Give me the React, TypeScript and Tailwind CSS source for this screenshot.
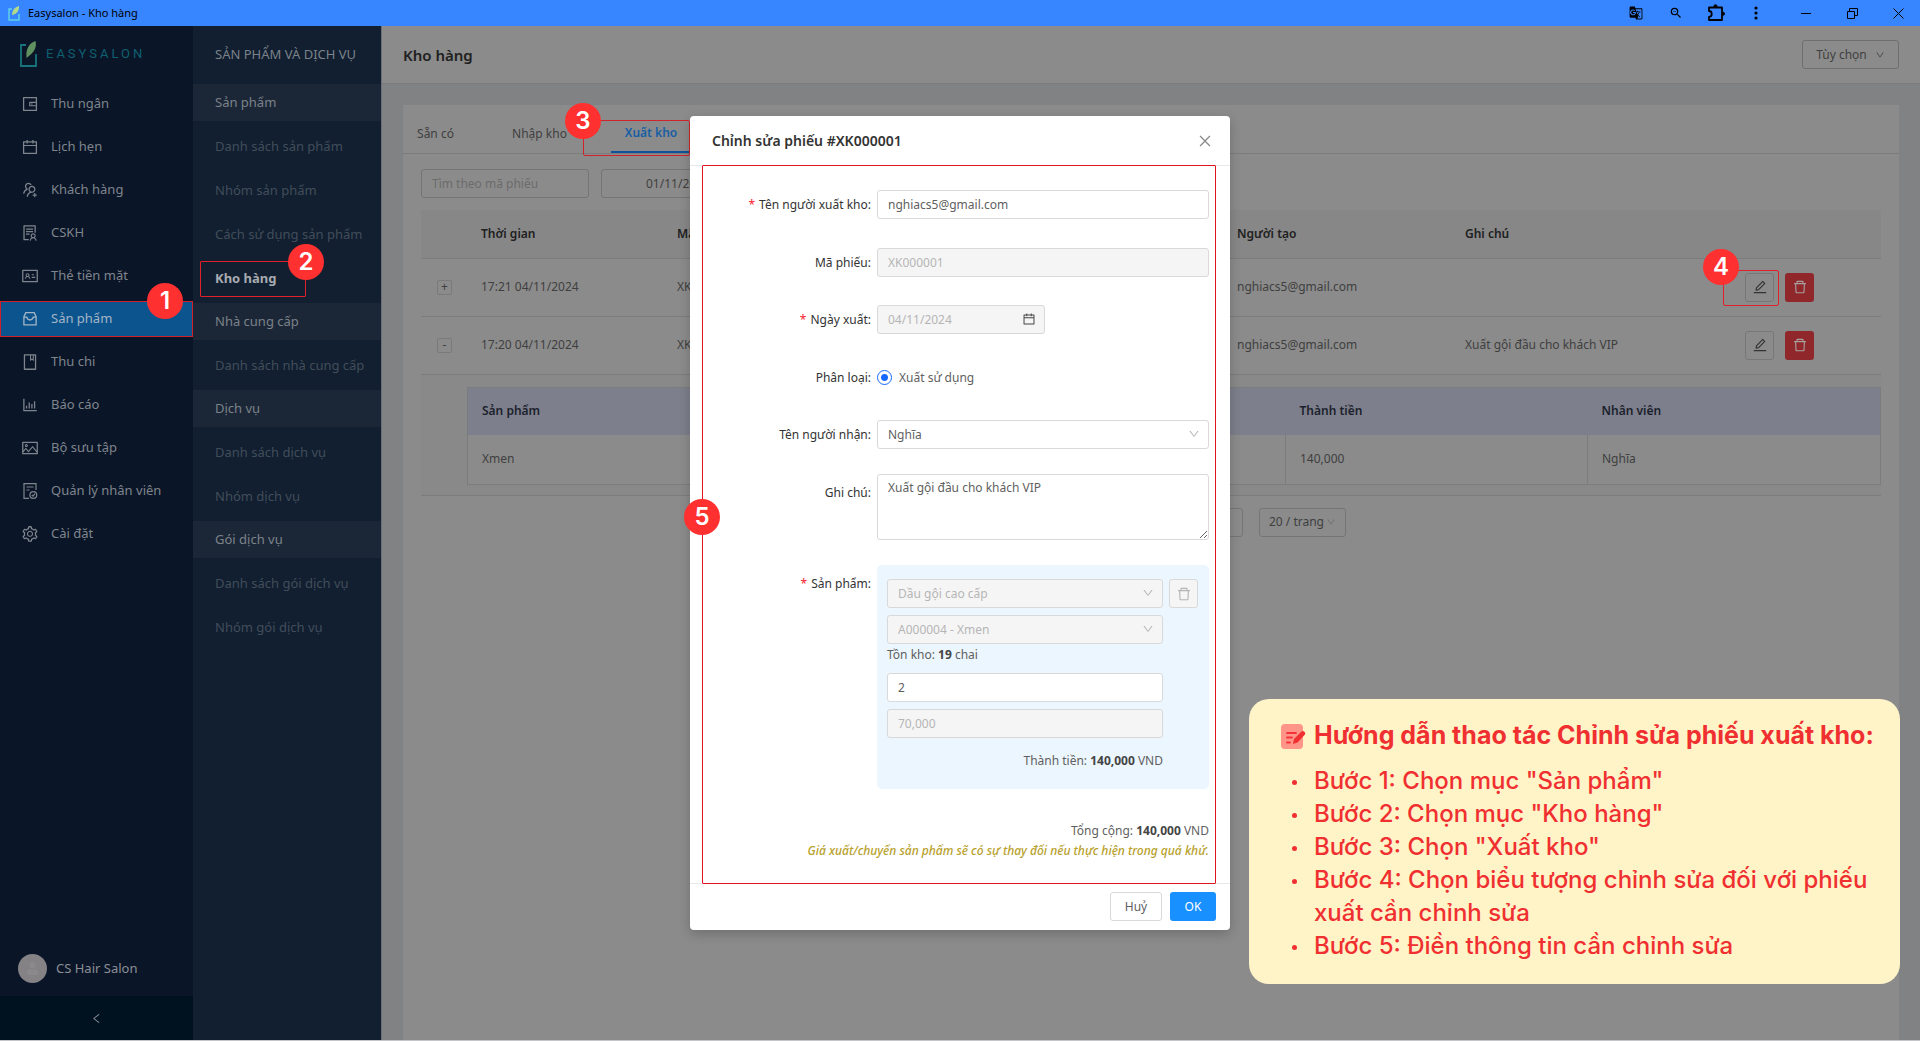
import React from "react";
import {
  AiOutlineWallet, AiOutlineCalendar, AiOutlineUsergroupAdd, AiOutlineSolution, AiOutlineIdcard,
  AiOutlineBook, AiOutlineBarChart, AiOutlinePicture, AiOutlineSetting,
  AiOutlineEdit, AiOutlineDelete, AiOutlineDown, AiOutlineLeft, AiOutlineClose,
} from "react-icons/ai";
import { MdGTranslate, MdZoomOut } from "react-icons/md";
import { FaUser } from "react-icons/fa";

const InboxIcon = ({ className }: { className?: string }) => (
  <svg viewBox="0 0 18 18" className={className} fill="none" stroke="currentColor" strokeWidth="1.300">
    <path d="M4.800 2.700h8.400l1.900 4v8.100H2.900V6.700z" />
    <path d="M3 7.200h2.800c.5 2 1.600 2.800 3.200 2.800s2.700-.8 3.200-2.800H15" />
  </svg>
);

const StaffIcon = ({ className }: { className?: string }) => (
  <svg viewBox="0 0 18 18" className={className} fill="none" stroke="currentColor" strokeWidth="1.200">
    <path d="M8 16.300H3V1.700h12v6.300M5.500 5h7M5.500 8h3" />
    <circle cx="12.300" cy="13" r="3.400" />
    <path d="M10.800 13l1.200 1.200 2-2.500" />
  </svg>
);

const PuzzleIcon = () => (
  <svg viewBox="0 0 18 18" className="size-[18px]" fill="none" stroke="black" strokeWidth="1.800">
    <path d="M2 3.500h13v12.500H2v-3.200c1.700 0 2.700-1.200 2.700-2.900S3.700 7 2 7z" strokeLinejoin="round" />
    <path d="M7 3V2.200a1.500 1.500 0 0 1 3 0V3zM15.500 8.200h.5a1.500 1.500 0 0 1 0 3h-.5z" fill="black" strokeWidth="1" />
  </svg>
);

const navItems = [
  { label: "Thu ngân", Icon: AiOutlineWallet },
  { label: "Lịch hẹn", Icon: AiOutlineCalendar },
  { label: "Khách hàng", Icon: AiOutlineUsergroupAdd },
  { label: "CSKH", Icon: AiOutlineSolution },
  { label: "Thẻ tiền mặt", Icon: AiOutlineIdcard },
  { label: "Sản phẩm", Icon: InboxIcon, active: true },
  { label: "Thu chi", Icon: AiOutlineBook },
  { label: "Báo cáo", Icon: AiOutlineBarChart },
  { label: "Bộ sưu tập", Icon: AiOutlinePicture },
  { label: "Quản lý nhân viên", Icon: StaffIcon },
  { label: "Cài đặt", Icon: AiOutlineSetting },
];

const groups = [
  { title: "Sản phẩm", items: ["Danh sách sản phẩm", "Nhóm sản phẩm", "Cách sử dụng sản phẩm", "Kho hàng"] },
  { title: "Nhà cung cấp", items: ["Danh sách nhà cung cấp"] },
  { title: "Dịch vụ", items: ["Danh sách dịch vụ", "Nhóm dịch vụ"] },
  { title: "Gói dịch vụ", items: ["Danh sách gói dịch vụ", "Nhóm gói dịch vụ"] },
];

function Badge({ n, className }: { n: number; className: string }) {
  return (
    <span className={`absolute z-10 flex size-9 items-center justify-center rounded-full bg-[#ff3030] font-['Inter',sans-serif] text-2xl font-semibold text-white ${className}`}>
      {n}
    </span>
  );
}

function TitleBar() {
  return (
    <header className="flex h-[26px] shrink-0 items-center bg-[#3785ff] text-black">
      <svg viewBox="0 0 12 16" className="ml-2 h-4 w-3">
        <path d="M4 4H1v11h10V9" fill="none" stroke="#5fd0e8" strokeWidth="1.500" />
        <path d="M4 10C4 5 7 2 11 1c.3 4-1.500 8-7 9z" fill="#b5d98a" />
      </svg>
      <span className="ml-2 text-[11px]">Easysalon - Kho hàng</span>
      <div className="ml-auto flex items-center">
        <button aria-label="Dịch" className="flex w-10 justify-center"><MdGTranslate className="size-[14px]" /></button>
        <button aria-label="Thu nhỏ chữ" className="flex w-10 justify-center"><MdZoomOut className="size-[14px]" /></button>
        <button aria-label="Tiện ích" className="flex w-10 justify-center"><PuzzleIcon /></button>
        <button aria-label="Menu" className="flex w-10 justify-center">
          <svg viewBox="0 0 4 14" className="h-[14px] w-1"><circle cx="2" cy="2" r="1.600" /><circle cx="2" cy="7" r="1.600" /><circle cx="2" cy="12" r="1.600" /></svg>
        </button>
        <button aria-label="Thu nhỏ" className="ml-2 flex w-11 justify-center">
          <svg viewBox="0 0 10 10" className="size-[10px]" stroke="black"><path d="M0 5.500h10" /></svg>
        </button>
        <button aria-label="Khôi phục" className="flex w-12 justify-center">
          <svg viewBox="0 0 11 11" className="size-[11px]" fill="none" stroke="black"><path d="M.5 3.500h7v7h-7zM2.500 3.500v-3h8v7h-3" /></svg>
        </button>
        <button aria-label="Đóng" className="flex w-11 justify-center">
          <svg viewBox="0 0 11 11" className="size-[11px]" stroke="black"><path d="M.5.5l10 10M10.500.5l-10 10" /></svg>
        </button>
      </div>
    </header>
  );
}

function MainNav() {
  return (
    <nav className="flex w-[193px] shrink-0 flex-col bg-[#0a1528] text-[13px] text-[#7f858c]">
      <a href="#" className="ml-5 flex h-[56px] items-center gap-2" aria-label="Easysalon">
        <svg viewBox="0 0 18 28" className="h-7 w-[18px]">
          <path d="M6 5H1v21h15V14" fill="none" stroke="#17747c" strokeWidth="1.800" />
          <path d="M6.500 18C5.500 9 9 3 15.500 1c1.500 6.500-1 11-9 17z" fill="#5f9060" />
        </svg>
        <span className="font-['Roboto',sans-serif] text-[13px] tracking-[3px] text-[#0f6070]">EASYSALON</span>
      </a>
      {navItems.map(({ label, Icon, active }) => (
        <div key={label} className="relative flex h-[43px] items-center">
          <a href="#" className={`flex h-9 w-full items-center gap-3 pl-[21px] ${active ? "bg-[#0c548e] text-[#a3b5c6] ring-1 ring-[#d0202c] ring-inset" : ""}`}>
            <Icon className="size-[18px]" />
            {label}
          </a>
          {active && <Badge n={1} className="right-[10px] -top-[14px]" />}
        </div>
      ))}
      <div className="mt-auto mb-[13px] flex items-center gap-[9px] pl-[18px] text-[#8b8f95]">
        <span className="flex size-[29px] items-center justify-center overflow-hidden rounded-full bg-[#848284]">
          <FaUser className="size-[13px] text-[#8b898b]" />
        </span>
        CS Hair Salon
      </div>
      <button aria-label="Thu gọn" className="flex h-11 items-center justify-center bg-[#001120]">
        <AiOutlineLeft className="size-[13px]" />
      </button>
    </nav>
  );
}

function SubNav() {
  return (
    <nav className="w-[189px] shrink-0 border-r border-[#6b7078] bg-[#111f30] text-[13px] text-[#7b828a]">
      <h2 className="flex h-[58px] items-center pl-[22px]">SẢN PHẨM VÀ DỊCH VỤ</h2>
      {groups.map((g) => (
        <section key={g.title}>
          <h3 className="flex h-[37px] items-center bg-[#1b2737] pl-[22px]">{g.title}</h3>
          <ul className="pt-1 pb-[2px]">
            {g.items.map((it) => (
              <li key={it} className="relative flex h-11 items-center">
                {it === "Kho hàng" ? (
                  <>
                    <a href="#" className="ml-[7px] flex h-9 w-[106px] items-center rounded-[1px] border border-[#e0202a] pl-[14px] font-bold text-[#a7abb0]">{it}</a>
                    <Badge n={2} className="left-[95px] -top-[13px]" />
                  </>
                ) : (
                  <a href="#" className="pl-[22px] text-[#424d5a]">{it}</a>
                )}
              </li>
            ))}
          </ul>
        </section>
      ))}
    </nav>
  );
}

const rows = [
  { open: false, time: "17:21 04/11/2024", code: "XK000002", user: "nghiacs5@gmail.com", note: "" },
  { open: true, time: "17:20 04/11/2024", code: "XK000001", user: "nghiacs5@gmail.com", note: "Xuất gội đầu cho khách VIP" },
];

function Warehouse() {
  return (
    <main className="flex min-w-0 flex-1 flex-col bg-[#808284] text-xs text-[#3f3f3f]">
      <div className="flex h-[58px] shrink-0 items-center justify-between border-b border-[#7b7c7d] bg-[#8b8b8b] px-[21px]">
        <h1 className="text-[15px] font-semibold text-[#202020]">Kho hàng</h1>
        <button className="flex h-[29px] w-[97px] items-center justify-center gap-2 rounded-[3px] border border-[#6f6f6f]">
          Tùy chọn <AiOutlineDown className="size-[10px]" />
        </button>
      </div>
      <section className="mx-[21px] mt-[21px] flex-1 bg-[#8b8b8b]">
        <div className="flex h-[49px] items-stretch border-b border-[#7c7c7c]">
          <button className="w-[65px] pt-[10px]">Sẵn có</button>
          <button className="w-[143px] pt-[10px]">Nhập kho</button>
          <div className="relative w-20">
            <button className="h-full w-full border-b-2 border-[#10529a] pt-[10px] font-semibold text-[#165fa5]">Xuất kho</button>
            <span className="absolute -left-7 top-[15px] h-9 w-[107px] rounded-[2px] border border-[#d0232b]" />
            <Badge n={3} className="-left-[46px] -top-[2px]" />
          </div>
        </div>
        <div className="flex gap-3 px-[18px] pt-[15px]">
          <input aria-label="Tìm theo mã phiếu" placeholder="Tìm theo mã phiếu" className="h-[29px] w-[168px] rounded-[3px] border border-[#757575] px-[10px] placeholder:text-[#6b6b6b]" />
          <button className="h-[29px] w-[260px] rounded-[3px] border border-[#757575] pl-11 text-left">01/11/2024 ~ 30/11/2024</button>
        </div>
        <div className="px-[18px] pt-3">
          <table className="w-full table-fixed text-left">
            <colgroup>
              <col className="w-[46px]" /><col className="w-[196px]" /><col className="w-[560px]" /><col className="w-[228px]" /><col /><col className="w-[150px]" />
            </colgroup>
            <thead>
              <tr className="h-12 border-b border-[#7c7c7c] bg-[#878787] text-[#202020]">
                <th aria-label="Mở rộng" />
                <th className="pl-[14px] font-semibold">Thời gian</th>
                <th className="pl-[14px] font-semibold">Mã phiếu</th>
                <th className="pl-[14px] font-semibold">Người tạo</th>
                <th className="pl-[14px] font-semibold">Ghi chú</th>
                <th aria-label="Thao tác" />
              </tr>
            </thead>
            <tbody>
              {rows.map((r) => (
                <tr key={r.code} className="h-[58px] border-b border-[#7c7c7c]">
                  <td>
                    <button className="ml-4 flex size-[15px] items-center justify-center rounded-[2px] border border-[#7a7a7a] leading-none">{r.open ? "-" : "+"}</button>
                  </td>
                  <td className="pl-[14px]">{r.time}</td>
                  <td className="pl-[14px]">{r.code}</td>
                  <td className="pl-[14px]">{r.user}</td>
                  <td className="pl-[14px]">{r.note}</td>
                  <td>
                    <div className="relative ml-[14px] flex gap-[11px]">
                      <button aria-label="Chỉnh sửa" className="flex size-[29px] items-center justify-center rounded-[3px] border border-[#777]"><AiOutlineEdit className="size-4 text-[#333]" /></button>
                      <button aria-label="Xoá" className="flex size-[29px] items-center justify-center rounded-[3px] bg-[#8f272b] text-[#a9a0a0]"><AiOutlineDelete className="size-4" /></button>
                      {!r.open && (
                        <>
                          <span className="absolute -left-[22px] -top-[3px] h-9 w-14 rounded-[2px] border border-[#e0202a]" />
                          <Badge n={4} className="-left-[42px] -top-[24px]" />
                        </>
                      )}
                    </div>
                  </td>
                </tr>
              ))}
              <tr className="border-b border-[#7c7c7c] bg-[#898989]">
                <td />
                <td colSpan={5} className="pt-3 pb-[10px]">
                  <table className="w-full table-fixed border border-[#7b7c80]">
                    <colgroup>
                      <col className="w-[516px]" /><col className="w-[302px]" /><col className="w-[302px]" /><col />
                    </colgroup>
                    <thead>
                      <tr className="h-12 bg-[#7d808c] text-[#1c1f2c]">
                        <th className="pl-[14px] font-semibold">Sản phẩm</th><th className="pl-[14px] font-semibold">Số lượng</th><th className="pl-[14px] font-semibold">Thành tiền</th><th className="pl-[14px] font-semibold">Nhân viên</th>
                      </tr>
                    </thead>
                    <tbody>
                      <tr className="h-[49px] bg-[#8b8b8b]">
                        <td className="pl-[14px]">Xmen</td>
                        <td className="pl-[14px]">2</td>
                        <td className="border-l border-[#7c7c7c] pl-[14px]">140,000</td>
                        <td className="border-l border-[#7c7c7c] pl-[14px]">Nghĩa</td>
                      </tr>
                    </tbody>
                  </table>
                </td>
              </tr>
            </tbody>
          </table>
          <div className="mt-3 flex justify-end gap-4 pr-[535px]">
            <button aria-label="Trang sau" className="size-[29px] rounded-[3px] border border-[#757575]" />
            <button className="flex h-[29px] w-[87px] items-center justify-center gap-[2px] rounded-[3px] border border-[#757575]">20 / trang<AiOutlineDown className="size-[10px] text-[#6b6b6b]" /></button>
          </div>
        </div>
      </section>
    </main>
  );
}

const field = "h-[29px] w-full rounded-[3px] border border-[#d9d9d9] px-[10px]";
const disabledField = "h-[29px] w-full rounded-[3px] border border-[#d9d9d9] bg-[#f5f5f5] px-[10px] text-[#b5b5b5]";

function Label({ id, text, required }: { id: string; text: string; required?: boolean }) {
  return (
    <label htmlFor={id} className="flex h-[29px] w-[169px] shrink-0 items-center justify-end gap-1 pr-[6px] text-[#333]">
      {required && <span className="text-[#f5222d]">*</span>}
      <span>{text}:</span>
    </label>
  );
}

function Select({ id, label, value, disabled }: { id?: string; label?: string; value: string; disabled?: boolean }) {
  return (
    <div className="relative w-full">
      <select id={id} aria-label={label} disabled={disabled} className={`${disabled ? disabledField : field} appearance-none opacity-100`}>
        <option>{value}</option>
      </select>
      <AiOutlineDown className="pointer-events-none absolute right-[9px] top-2 size-3 text-[#b5b5b5]" />
    </div>
  );
}

function EditDialog() {
  return (
    <div className="absolute inset-x-0 top-[116px] flex justify-center">
      <div role="dialog" aria-label="Chỉnh sửa phiếu" className="relative w-[540px] rounded-[4px] bg-white text-xs text-[#5f5f5f] shadow-[0_4px_12px_rgba(0,0,0,0.2)]">
        <div className="flex h-[50px] items-center justify-between border-b border-[#e8e8e8] pl-[22px] pr-[17px]">
          <h2 className="text-sm font-semibold text-[#333]">Chỉnh sửa phiếu #XK000001</h2>
          <button aria-label="Đóng"><AiOutlineClose className="size-4 text-[#8a8a8a]" /></button>
        </div>
        <form className="flex h-[717px] flex-col pl-[18px] pr-[21px] pt-6">
          <div className="flex"><Label id="exporter" text="Tên người xuất kho" required /><input id="exporter" defaultValue="nghiacs5@gmail.com" className={field} /></div>
          <div className="mt-[29px] flex"><Label id="code" text="Mã phiếu" /><input id="code" disabled defaultValue="XK000001" className={disabledField} /></div>
          <div className="mt-7 flex">
            <Label id="date" text="Ngày xuất" required />
            <div className="relative w-[168px]">
              <input id="date" disabled defaultValue="04/11/2024" className={disabledField} />
              <AiOutlineCalendar className="absolute right-[9px] top-[7px] size-[14px] text-[#444]" />
            </div>
          </div>
          <div className="mt-[29px] flex">
            <span className="flex h-[29px] w-[169px] shrink-0 items-center justify-end pr-[6px] text-[#333]">Phân loại:</span>
            <label className="flex items-center gap-[7px]">
              <input type="radio" defaultChecked className="size-[15px] appearance-none rounded-full border border-[#1668ff] bg-[radial-gradient(circle,#1668ff_3px,white_4px)]" />
              Xuất sử dụng
            </label>
          </div>
          <div className="mt-7 flex"><Label id="receiver" text="Tên người nhận" /><Select id="receiver" value="Nghĩa" /></div>
          <div className="mt-[25px] flex">
            <div className="pt-1"><Label id="note" text="Ghi chú" /></div>
            <textarea id="note" defaultValue="Xuất gội đầu cho khách VIP" className="h-[66px] w-full rounded-[3px] border border-[#d9d9d9] px-[10px] py-[5px]" />
          </div>
          <div className="mt-[25px] flex">
            <div className="pt-1"><Label id="product" text="Sản phẩm" required /></div>
            <div className="h-[224px] w-full rounded-[5px] bg-[#ecf6fe] px-[10px] pt-[14px]">
              <div className="flex gap-[6px]">
                <div className="w-[276px]"><Select id="product" value="Dầu gội cao cấp" disabled /></div>
                <button type="button" aria-label="Xoá sản phẩm" disabled className="flex size-[29px] items-center justify-center rounded-[3px] border border-[#d9d9d9] bg-[#f5f5f5] text-[#b5b5b5]"><AiOutlineDelete className="size-4" /></button>
              </div>
              <div className="mt-[7px] w-[276px]"><Select label="Mặt hàng" value="A000004 - Xmen" disabled /></div>
              <p className="mb-2 leading-[21px]">Tồn kho: <b className="text-[#444]">19</b> chai</p>
              <input aria-label="Số lượng" defaultValue="2" className="block h-[29px] w-[276px] rounded-[3px] border border-[#d9d9d9] bg-white px-[10px]" />
              <input aria-label="Đơn giá" disabled defaultValue="70,000" className="mt-[7px] block h-[29px] w-[276px] rounded-[3px] border border-[#d9d9d9] bg-[#f5f5f5] px-[10px] text-[#b5b5b5]" />
              <p className="mt-3 w-[276px] text-right leading-[21px]">Thành tiền: <b className="text-[#444]">140,000</b> VND</p>
            </div>
          </div>
          <div className="mt-8 text-right leading-5">
            <p>Tổng cộng: <b className="text-[#444]">140,000</b> VND</p>
            <p className="whitespace-nowrap font-medium italic text-[#b8a12c]">Giá xuất/chuyển sản phẩm sẽ có sự thay đổi nếu thực hiện trong quá khứ.</p>
          </div>
        </form>
        <div className="flex justify-end gap-2 border-t border-[#e8e8e8] px-[14px] pt-2 pb-[9px]">
          <button className="h-[29px] w-[52px] rounded-[3px] border border-[#d9d9d9]">Huỷ</button>
          <button className="h-[29px] w-[46px] rounded-[3px] bg-[#1890ff] text-white">OK</button>
        </div>
        <span className="pointer-events-none absolute top-[49px] right-[14px] bottom-[46px] left-3 rounded-[1px] border border-[#e0141c]" />
        <Badge n={5} className="-left-[6px] top-[383px]" />
      </div>
    </div>
  );
}

const steps = [
  'Bước 1: Chọn mục "Sản phẩm"',
  'Bước 2: Chọn mục "Kho hàng"',
  'Bước 3: Chọn "Xuất kho"',
  "Bước 4: Chọn biểu tượng chỉnh sửa đối với phiếu xuất cần chỉnh sửa",
  "Bước 5: Điền thông tin cần chỉnh sửa",
];

function Guide() {
  return (
    <aside className="absolute right-5 bottom-14 h-[285px] w-[651px] rounded-[20px] bg-[#fff3c8] pt-5 pr-5 pl-8 font-['Inter',sans-serif] text-2xl text-[#f03030]">
      <h2 className="flex h-[34px] items-center gap-2 whitespace-nowrap text-[25px] font-bold">
        <svg viewBox="0 0 25 25" className="size-[25px] shrink-0">
          <rect x="0" y="0" width="22" height="25" rx="4" fill="#ff9488" />
          <path d="M6 9h9M6 13.500h5M6 18.500h3" stroke="#f5333b" strokeWidth="1.800" strokeLinecap="round" />
          <path d="M12 20l1-5 7.500-7.500q1.500-1.200 3 .2t.3 3L16.500 18.500z" fill="#f03030" />
        </svg>
        Hướng dẫn thao tác Chỉnh sửa phiếu xuất kho:
      </h2>
      <ul className="mt-[11px] pl-[11px] font-medium leading-[33px]">
        {steps.map((s) => (
          <li key={s} className="flex gap-[17px]">
            <span className="mt-4 size-[5px] shrink-0 rounded-full bg-[#f03030]" />
            <span>{s}</span>
          </li>
        ))}
      </ul>
    </aside>
  );
}

export default function App() {
  return (
    <div className="relative flex min-h-screen flex-col border-b border-[#c4c5c8] font-['Noto_Sans',sans-serif]">
      <TitleBar />
      <div className="flex flex-1">
        <MainNav />
        <SubNav />
        <Warehouse />
      </div>
      <EditDialog />
      <Guide />
    </div>
  );
}
